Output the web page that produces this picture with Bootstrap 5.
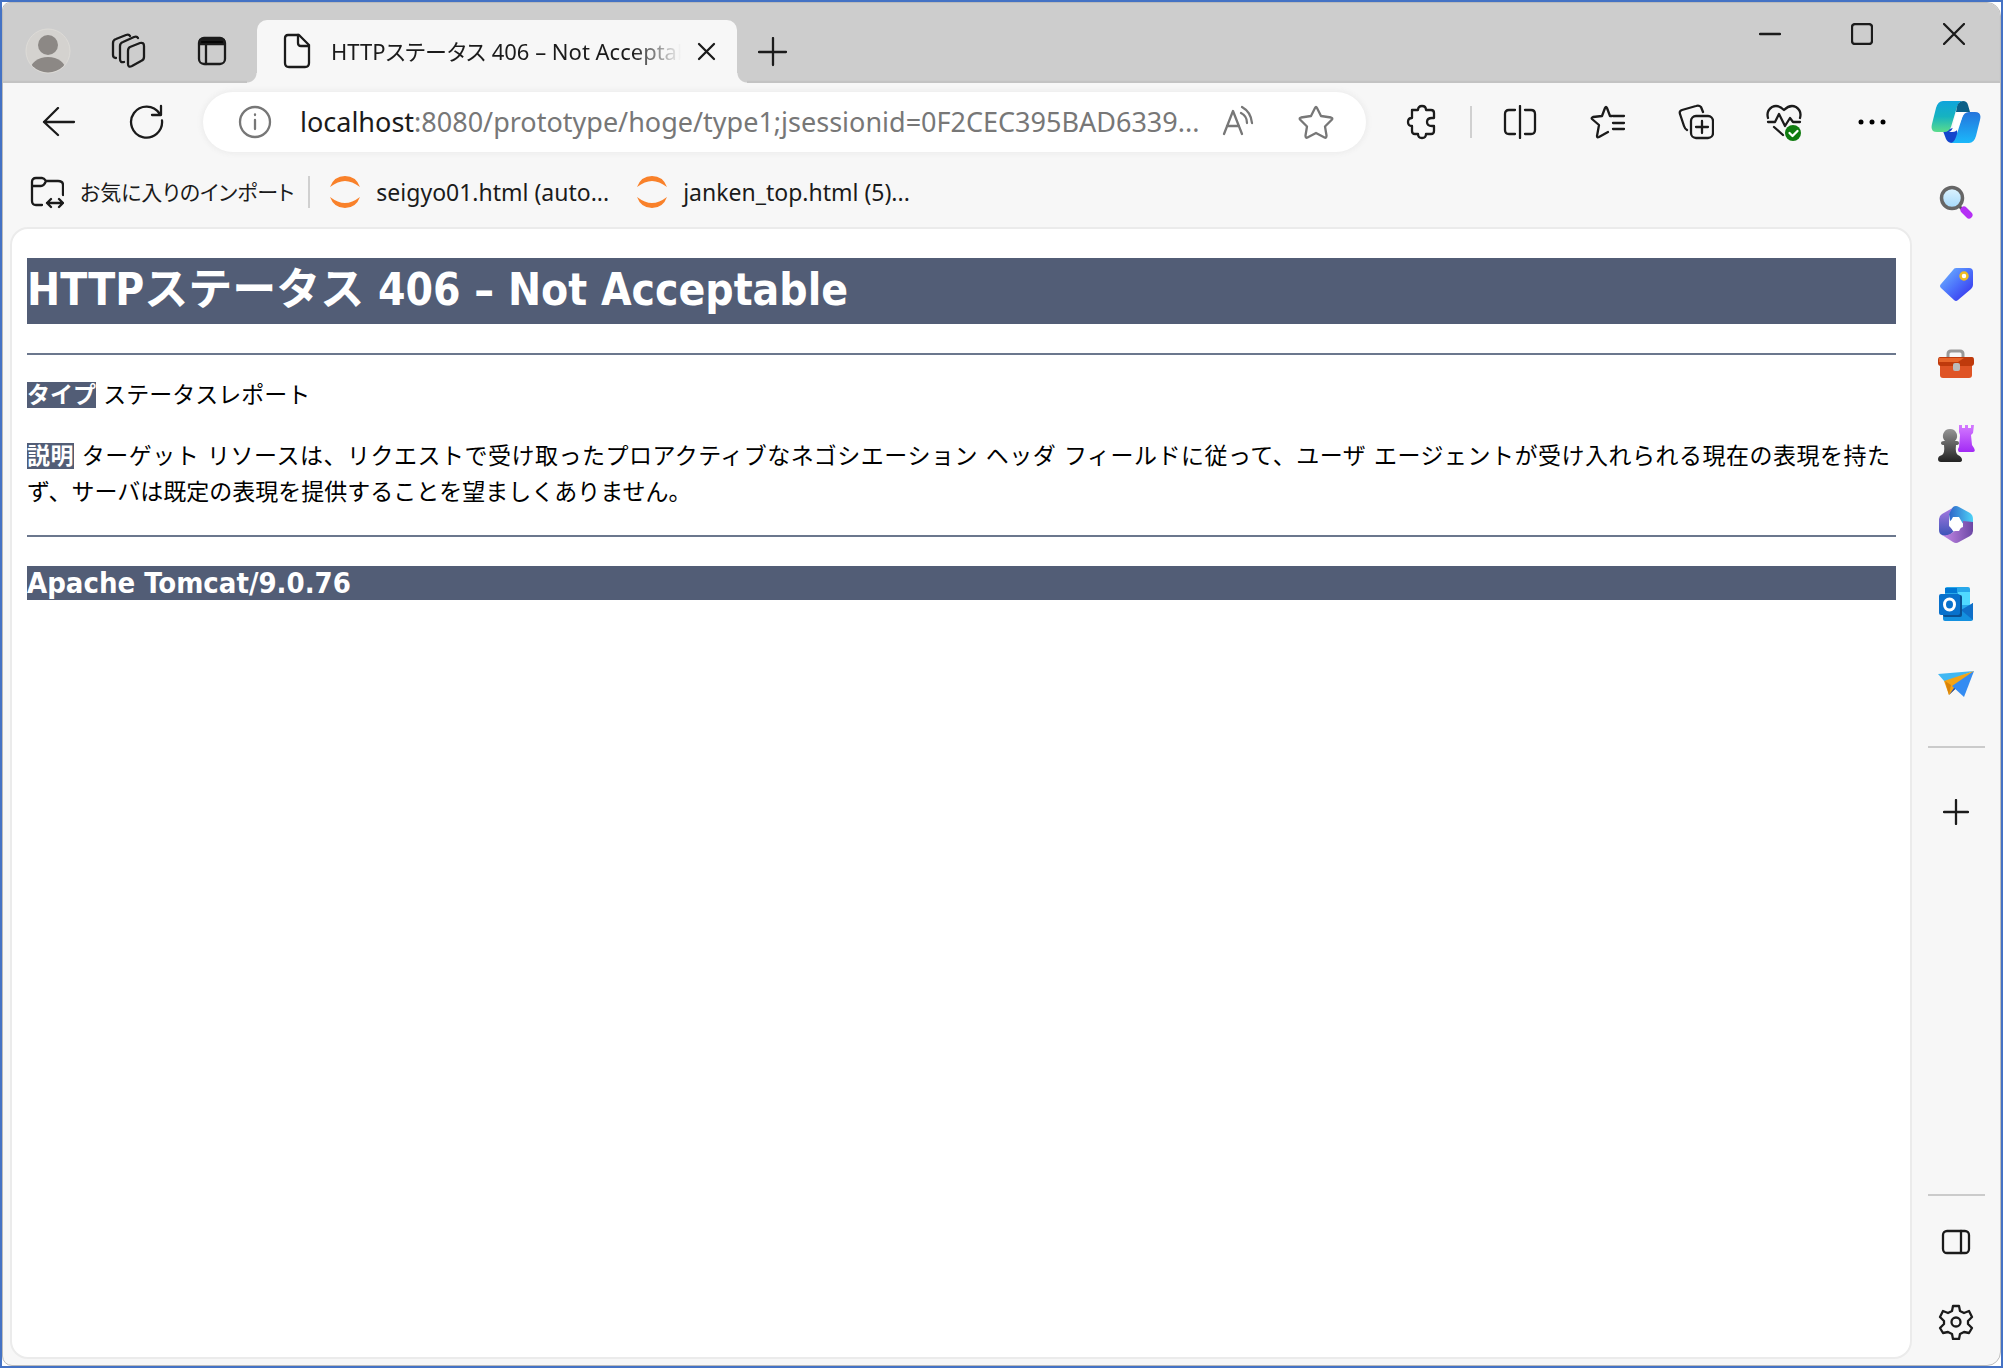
<!DOCTYPE html>
<html lang="ja">
<head>
<meta charset="utf-8">
<meta name="viewport" content="width=device-width, initial-scale=1">
<title>HTTPステータス 406 – Not Acceptable</title>
<link href="https://cdn.jsdelivr.net/npm/bootstrap@5.3.0/dist/css/bootstrap.min.css" rel="stylesheet">
<style>
body{font-family:"Noto Sans","Noto Sans CJK JP",sans-serif;font-size:22px;line-height:32px;color:#1b1b1b;background:#fff}
.frame{min-height:100vh;border:2px solid #4472c4}
.window-shell{background:#f7f7f7;border-radius:8px 14px 14px 10px;overflow:hidden;border:1px solid #bbb}
svg{display:block;flex:none}
.ln{fill:none;stroke:#1b1b1b;stroke-width:2.3;stroke-linecap:round;stroke-linejoin:round}
.gy{stroke:#777}
.ibtn{border:0;background:none;padding:0;display:flex;align-items:center;justify-content:center;flex:none}
.strip{height:80px;background:#cdcdcd;box-shadow:inset 0 -2px 1px #c3c3c3}
.strip-tools{padding:16px 0 0 4px}
.strip-btn{width:82px;height:62px}
.page-tab{width:480px;height:63px;background:#f7f7f7;border-radius:10px 10px 0 0;position:relative;padding:0 18px 2px 24px;margin-left:4px}
.page-tab::before,.page-tab::after{content:"";position:absolute;bottom:0;width:10px;height:10px}
.page-tab::before{left:-10px;background:radial-gradient(circle at 0 0,#cdcdcd 9px,#f7f7f7 10px)}
.page-tab::after{right:-10px;background:radial-gradient(circle at 100% 0,#cdcdcd 9px,#f7f7f7 10px)}
.tab-title{font-size:22px;font-feature-settings:"palt";color:#1b1b1b;text-decoration:none;white-space:nowrap;overflow:hidden;margin:0 14px 0 18px;-webkit-mask-image:linear-gradient(90deg,#000 86%,transparent);mask-image:linear-gradient(90deg,#000 86%,transparent)}
.new-tab{width:72px;height:62px}
.win-btn{width:92px;height:62px}
.toolbar{height:78px;gap:8px;padding-left:16px}
.tool-btn{width:80px;height:60px}
.pill{height:60px;background:#fff;border-radius:30px;box-shadow:0 0 5px 2px #ededed;margin:0 8px;padding:0 32px 0 35px}
.pill-tools{gap:42px}
.host,.url{font-size:27px;line-height:36px}
.url{border:0;padding:0;color:#777;background:none;outline:0;min-width:0;text-overflow:ellipsis}
.vline{width:2px;height:32px;background:#d0d0d0}
.favs{height:62px;padding-left:27px}
.favs a{font-size:23px;color:#1b1b1b;text-decoration:none;white-space:nowrap}
.favs .fav-import{font-size:21px;font-feature-settings:"palt"}
.favs .vline{margin:0 20px 0 14px}
.view{background:#fff;border:2px solid #ebebeb;border-radius:18px;margin:4px 0 6px 7px;padding:29px 14px 0 15px;font-family:"DejaVu Sans Condensed","Noto Sans CJK JP",sans-serif;font-size:23px;line-height:36px;color:#000}
.view h1,.view h3{background:#525d76;color:#fff;font-weight:700;margin:0}
.view h1{font-size:44px;line-height:64px;padding-bottom:2px}
.view h3{font-size:29px;line-height:34px}
.view b{background:#525d76;color:#fff}
.view hr{height:2px;background:#6b778d;border:0;opacity:1;margin:29px 0 22px}
.view p{font-family:"DejaVu Sans","Noto Sans CJK JP",sans-serif;margin:0 0 25px;padding-right:6px;text-align:justify}
.view hr.foot-rule{margin:25px 0 29px}
.side{width:88px;flex:none;padding-top:9px}
.side .ibtn{width:80px;height:60px;margin-bottom:20px}
.side .ibtn:nth-child(2){margin-bottom:22px}
.side .side-add{margin:34px 0 auto}
.side .side-gear{margin-bottom:13px}
.side-line{width:57px;height:2px;background:#cbcbcb}
.side-split{margin-top:12px}
</style>
<script src="https://cdn.jsdelivr.net/npm/bootstrap@5.3.0/dist/js/bootstrap.bundle.min.js"></script>
</head>
<body>
<div class="frame d-flex flex-column">
<div class="window-shell flex-grow-1 d-flex flex-column">
  <header class="strip d-flex align-items-end">
    <div class="strip-tools d-flex align-items-center h-100">
      <button class="ibtn strip-btn" aria-label="プロファイル"><svg width="46" height="46" viewBox="0 0 46 46"><defs><clipPath id="av"><circle cx="23" cy="23" r="21.500"/></clipPath></defs><circle cx="23" cy="23" r="22" fill="#d4d2cf" stroke="#dddbd7"/><g clip-path="url(#av)" fill="#8c8885"><circle cx="23" cy="17" r="10"/><ellipse cx="23" cy="43" rx="18" ry="14"/></g></svg></button>
      <button class="ibtn strip-btn pe-1" aria-label="ワークスペース"><svg width="36" height="36" viewBox="0 0 36 36" class="ln"><path d="M20 14l10-4q4-1 4 3v11q0 3-3 4l-9 5q-4 2-4-2V18q0-3 2-4z"/><path d="M14 29q-4 1-4-3V13q0-3 3-4l11-5q3-1 4 1"/><path d="M6 25q-3 0-3-3V10q0-3 3-4L16 2q3-1 4 1"/></svg></button>
      <button class="ibtn strip-btn" aria-label="タブ操作メニュー"><svg width="30" height="30" viewBox="0 0 30 30" class="ln"><rect x="2" y="2" width="26" height="26" rx="5"/><path d="M3 4h24v4H3z" fill="#000"/><path d="M9 8v20"/></svg></button>
    </div>
    <div class="page-tab d-flex align-items-center">
      <svg width="32" height="36" viewBox="0 0 32 36" class="ln"><path d="M7 2h11l10 10v18q0 4-4 4H8q-4 0-4-4V5q0-3 3-3z"/><path d="M17 2v8q0 3 3 3h8"/></svg>
      <a href="#" class="tab-title flex-grow-1">HTTPステータス 406 – Not Acceptable</a>
      <button class="ibtn" aria-label="タブを閉じる"><svg width="24" height="24" viewBox="0 0 24 24" class="ln"><path d="M4 5l15 15M19 5L4 20"/></svg></button>
    </div>
    <button class="ibtn new-tab" aria-label="新しいタブ"><svg width="30" height="30" viewBox="0 0 30 30" class="ln"><path d="M1 15h27M15 1v27"/></svg></button>
    <div class="d-flex align-self-start ms-auto">
      <button class="ibtn win-btn" aria-label="最小化"><svg width="22" height="22" viewBox="0 0 22 22" class="ln"><path d="M1 11h20"/></svg></button>
      <button class="ibtn win-btn" aria-label="最大化"><svg width="22" height="22" viewBox="0 0 22 22" class="ln"><rect x="1" y="1" width="20" height="20" rx="3"/></svg></button>
      <button class="ibtn win-btn" aria-label="閉じる"><svg width="22" height="22" viewBox="0 0 22 22" class="ln"><path d="M1 1l20 20M21 1L1 21"/></svg></button>
    </div>
  </header>
  <div class="d-flex flex-grow-1">
    <div class="d-flex flex-column flex-grow-1" style="min-width:0">
      <div class="toolbar d-flex align-items-center">
        <button class="ibtn tool-btn" aria-label="戻る"><svg width="34" height="30" viewBox="0 0 34 30" class="ln"><path d="M16 1L2 15l14 13M2 15h30"/></svg></button>
        <button class="ibtn tool-btn" aria-label="更新"><svg width="36" height="36" viewBox="0 0 36 36" class="ln"><path d="M33 16.500A15.500 15.500 0 1 1 30.500 9.500M32 2v9h-9"/></svg></button>
        <div class="pill d-flex align-items-center flex-grow-1">
          <svg width="34" height="34" viewBox="0 0 34 34" class="ln gy me-4"><circle cx="17" cy="17" r="15"/><path d="M17 15v9M17 9.500v.5"/></svg>
          <label class="host ms-1" for="addr">localhost</label>
          <input class="url flex-grow-1" id="addr" value=":8080/prototype/hoge/type1;jsessionid=0F2CEC395BAD6339...">
          <div class="pill-tools d-flex ms-1">
            <button class="ibtn" aria-label="音声で読み上げる"><svg width="36" height="36" viewBox="0 0 36 36" class="ln gy"><path d="M4 30L13 7l9 23M7 22h12M21 9q6 3 6 10M22 3q9 5 10 16"/></svg></button>
            <button class="ibtn" aria-label="お気に入りに追加"><svg width="36" height="36" viewBox="0 0 36 36" class="ln gy"><path d="M17 4q1-2 2 0l4 8 10 1.500q2 .5 1 2l-7 7 1.500 9q0 3-2 2L18 29l-8.500 4.500q-2 1-2-2l1.500-9-7-7q-1-1.500 1-2L13 12z"/></svg></button>
          </div>
        </div>
        <button class="ibtn tool-btn" aria-label="拡張機能"><svg width="36" height="36" viewBox="0 0 36 36" class="ln"><path d="M8 6h6q0-4 4-4t4 4h5q3 0 3 3v5h-2q-5 0-5 4t5 4h2v5q0 3-3 3h-5q0 4-4 4t-4-4h-3q-3 0-3-3v-5q-4 0-4-4t4-4V9q0-3 0-3z"/></svg></button>
        <div class="vline"></div>
        <button class="ibtn tool-btn" aria-label="画面を分割"><svg width="34" height="34" viewBox="0 0 34 34" class="ln"><path d="M12 5H6q-4 0-4 4v16q0 4 4 4h6M22 5h6q4 0 4 4v16q0 4-4 4h-6M17 1v32"/></svg></button>
        <button class="ibtn tool-btn" aria-label="お気に入り"><svg width="36" height="36" viewBox="0 0 36 36" class="ln"><path d="M22 12h-2l-3-8q-1-2-2 0l-3 8-9 1q-2 1-1 2l7 6-2 11q0 2 2 1l9-5M23 12h11M23 19h11M23 25h11"/></svg></button>
        <button class="ibtn tool-btn" aria-label="コレクション"><svg width="36" height="36" viewBox="0 0 36 36" class="ln"><rect x="13" y="12" width="22" height="22" rx="5"/><path d="M24 17v12M18 23h12M9 26q-2-1-3-4L2 10q-1-3 2-4l14-4q3-1 5 1l2 5"/></svg></button>
        <button class="ibtn tool-btn" aria-label="ブラウザー エッセンシャル"><svg width="38" height="38" viewBox="0 0 38 38" class="ln"><path d="M3 15Q1 8 7 4q6-3 12 3 6-6 12-3 6 4 4 11M3 19h7l4-8 6 12 5-8 3 4h7M9 24l9 8"/><circle cx="28" cy="30" r="8" fill="#107c10" stroke="none"/><path d="M24.500 30l3 3 5-5" stroke="#fff"/></svg></button>
        <button class="ibtn tool-btn" aria-label="設定など"><svg width="30" height="8" viewBox="0 0 30 8"><circle cx="4" cy="4" r="2.500"/><circle cx="15" cy="4" r="2.500"/><circle cx="26" cy="4" r="2.500"/></svg></button>
      </div>
      <nav class="favs d-flex align-items-center">
        <a href="#" class="fav-import d-flex align-items-center"><svg class="ln me-3" width="34" height="34" viewBox="0 0 34 34"><path d="M12 30H6q-4 0-4-4V7q0-4 4-4h6q2 0 4 3h12q5 0 5 4v10M2 11h9q3 0 5-5M17 28h16M21 24l-4 4 4 4M29 24l4 4-4 4"/></svg>お気に入りのインポート</a>
        <div class="vline"></div>
        <a href="#" class="d-flex align-items-center"><svg class="me-3" width="30" height="34" viewBox="0 0 30 34" fill="#f9812a"><path d="M0 12Q4 1 15 1t15 11Q22 6 15 6T0 12zM0 22q4 11 15 11t15-11q-8 6-15 6T0 22z"/></svg>seigyo01.html (auto...</a>
        <a href="#" class="d-flex align-items-center ms-4 ps-1"><svg class="me-3" width="30" height="34" viewBox="0 0 30 34" fill="#f9812a"><path d="M0 12Q4 1 15 1t15 11Q22 6 15 6T0 12zM0 22q4 11 15 11t15-11q-8 6-15 6T0 22z"/></svg>janken_top.html (5)...</a>
      </nav>
      <main class="view flex-grow-1">
        <h1>HTTPステータス 406 – Not Acceptable</h1>
        <hr>
        <p><b>タイプ</b> ステータスレポート</p>
        <p><b>説明</b> ターゲット リソースは、リクエストで受け取ったプロアクティブなネゴシエーション ヘッダ フィールドに従って、ユーザ エージェントが受け入れられる現在の表現を持たず、サーバは既定の表現を提供することを望ましくありません。</p>
        <hr class="foot-rule">
        <h3>Apache Tomcat/9.0.76</h3>
      </main>
    </div>
    <aside class="side d-flex flex-column align-items-center">
      <button class="ibtn" aria-label="Copilot"><svg width="50" height="44" viewBox="0 0 50 44"><defs><linearGradient id="c1" x2="0" y2="1"><stop stop-color="#0fa4dc"/><stop offset=".5" stop-color="#16b3c0"/><stop offset="1" stop-color="#5bdc8c"/></linearGradient><linearGradient id="c2" x2="0" y2="1"><stop stop-color="#2474dc"/><stop offset="1" stop-color="#1bb8fa"/></linearGradient></defs><path d="M12 31l3 8q2 4 6 4h8l-4-16z" fill="#1446cc"/><path d="M12 1h20q-4 0-6 6l-6 20q-2 5-7 5H6q-7 0-5-8L5 8q2-7 7-7z" fill="url(#c1)"/><path d="M38 43H19q4 0 6-6l6-19q2-6 7-6h6q7 0 5 8l-4 16q-2 7-7 7z" fill="url(#c2)"/><path d="M26 12h9q-3 1-4 6l-4 10q-1 4-6 4h-3q3-1 4-5l2-10q1-4 2-5z" fill="#fff"/><path d="M25 12q1-11 7-11 4 0 5 4l2 7z" fill="#0b5f87"/></svg></button>
      <button class="ibtn" aria-label="検索"><svg width="34" height="34" viewBox="0 0 34 34"><defs><linearGradient id="s1" x2="0" y2="1"><stop stop-color="#dff4ff"/><stop offset="1" stop-color="#a3d8fa"/></linearGradient></defs><path d="M20 21l4 4" stroke="#555" stroke-width="3"/><circle cx="13" cy="13" r="10.500" fill="url(#s1)" stroke="#666" stroke-width="3.500"/><path d="M25 25l5 5" stroke="#b52ff5" stroke-width="7" stroke-linecap="round"/></svg></button>
      <button class="ibtn" aria-label="ショッピング"><svg width="36" height="36" viewBox="0 0 36 36"><defs><linearGradient id="t1" x2="1" y2="1"><stop stop-color="#73bcff"/><stop offset=".5" stop-color="#4c72fb"/><stop offset="1" stop-color="#3326e8"/></linearGradient></defs><path d="M18 2h13q4 0 4 4v13q0 2-2 4L20 34q-2 2-4 0L3 22q-2-2 0-4L15 4q1-2 3-2z" fill="url(#t1)"/><circle cx="26" cy="10" r="3.500" fill="#fff" stroke="#eebc22" stroke-width="2.500"/></svg></button>
      <button class="ibtn" aria-label="ツール"><svg width="38" height="30" viewBox="0 0 38 30"><path d="M11 9V5q0-3 3-3h9q3 0 3 3v4" fill="none" stroke="#999" stroke-width="3"/><path d="M3 14h32v12q0 3-3 3H6q-3 0-3-3z" fill="#df5425"/><path d="M3 8h32q2 0 2 3v3q0 3-3 3H4q-3 0-3-3v-3q0-3 2-3z" fill="#bf3a0c"/><path d="M2 9h25l-6 4H2z" fill="#e7652a"/><rect x="16" y="14" width="7" height="8" rx="2" fill="#bbb"/></svg></button>
      <button class="ibtn" aria-label="ゲーム"><svg width="38" height="40" viewBox="0 0 38 40"><defs><linearGradient id="g1" x2="0" y2="1"><stop stop-color="#969696"/><stop offset="1" stop-color="#222"/></linearGradient><linearGradient id="g2" x2="0" y2="1"><stop stop-color="#d47bff"/><stop offset="1" stop-color="#a22af5"/></linearGradient></defs><path d="M22 1h3v3h3V1h3v3h3V1h3l-1 8-2 2 1 10 2 3q2 4-1 4H22q-2-2 0-5l1-12-1-3z" fill="url(#g2)"/><path d="M13 5a7 7 0 0 1 5 12h2q2 0 2 2t-3 2q-1 8 2 10 4 2 4 5 0 2-3 2H4q-3 0-3-3t4-4q3-2 2-10-3 0-3-2t3-2h1a7 7 0 0 1 5-12z" fill="url(#g1)"/></svg></button>
      <button class="ibtn" aria-label="Microsoft 365"><svg width="36" height="38" viewBox="0 0 36 38"><defs><linearGradient id="m1" x2="0" y2="1"><stop stop-color="#b07de4"/><stop offset="1" stop-color="#3b53b8"/></linearGradient><linearGradient id="m2"><stop stop-color="#2f65c8"/><stop offset="1" stop-color="#4ed2f7"/></linearGradient><linearGradient id="m3"><stop stop-color="#c88be8"/><stop offset="1" stop-color="#6b47a5"/></linearGradient></defs><path d="M18 1L4 9q-3 2-3 5v11q0 4 3 5 6 3 12-4l-5-5V9z" fill="url(#m1)"/><path d="M11 9l4-7q3-2 6 0l11 6q3 2 3 6v10l-10-5-6-7-7 4z" fill="url(#m2)"/><path d="M35 17v9q0 3-3 5l-11 6q-3 2-6 0L4 30q6 2 14-5l7-3V16z" fill="url(#m3)"/><path d="M15 12h6l4 7-4 7h-6l-4-7z" fill="#fff"/></svg></button>
      <button class="ibtn" aria-label="Outlook"><svg width="36" height="36" viewBox="0 0 36 36"><rect x="7" y="1" width="25" height="24" rx="2" fill="#28a8ea"/><path d="M7 2h12v5H7z" fill="#0078d4"/><path d="M20 6h12v13H20z" fill="#50d9ff"/><path d="M5 18l17 8 13-9v16q0 2-2 2H7q-2 0-2-2z" fill="#1490df"/><path d="M23 24l12-7v17z" fill="#0f6fc8"/><rect x="5" y="9" width="19" height="22" rx="2" fill="#0a4f91"/><rect x="1" y="8" width="21" height="21" rx="2" fill="#0871cc"/><ellipse cx="11.500" cy="18.500" rx="5" ry="5.500" fill="none" stroke="#fff" stroke-width="3"/></svg></button>
      <button class="ibtn" aria-label="Drop"><svg width="36" height="28" viewBox="0 0 36 28"><path d="M0 4L36 1 7 12z" fill="#41b8f3"/><path d="M36 1L6 11l5 14z" fill="#f5a414"/><path d="M36 1L11 25l5-7z" fill="#1748b8"/><path d="M36 1L14 16l12 11z" fill="#348cf2"/><path d="M11 25l-4-14 6 4z" fill="#d98209"/></svg></button>
      <div class="side-line side-split"></div>
      <button class="ibtn side-add" aria-label="カスタマイズ"><svg width="26" height="26" viewBox="0 0 26 26" class="ln"><path d="M1 13h24M13 1v24"/></svg></button>
      <div class="side-line mb-3"></div>
      <button class="ibtn" aria-label="サイドバー"><svg width="30" height="26" viewBox="0 0 30 26" class="ln"><rect x="2" y="2" width="26" height="22" rx="4"/><path d="M20 2v22"/></svg></button>
      <button class="ibtn side-gear" aria-label="設定"><svg width="36" height="36" viewBox="0 0 36 36" class="ln"><circle cx="18" cy="18" r="4.500"/><path d="M15 2h6l1 5 4 2 5-2 3 6-4 4v3l4 4-3 5-5-1-4 2-1 5h-6l-1-5-4-2-5 1-3-5 4-4v-3l-4-4 3-6 5 2 4-2z"/></svg></button>
    </aside>
  </div>
</div>
</div>
</body>
</html>
